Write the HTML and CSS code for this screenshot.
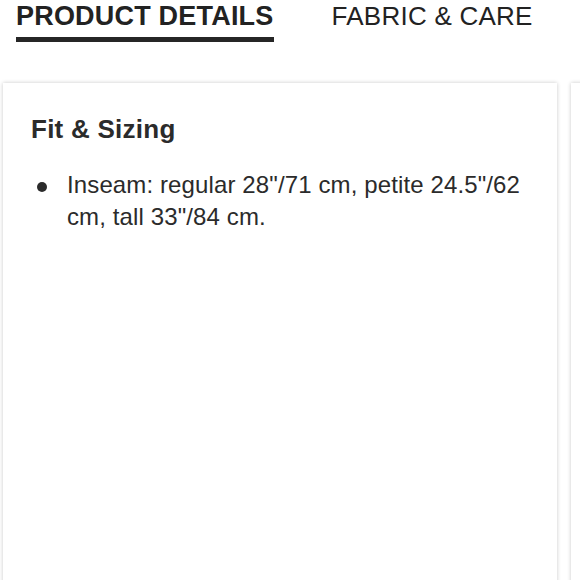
FILE: index.html
```html
<!DOCTYPE html>
<html>
<head>
<meta charset="utf-8">
<link rel="stylesheet" href="styles.css">
</head>
<body>
<nav class="tabs">
  <div class="tab tab-active">PRODUCT DETAILS</div>
  <div class="tab">FABRIC &amp; CARE</div>
</nav>
<div class="cards">
  <section class="card">
    <h2 class="card-title">Fit &amp; Sizing</h2>
    <ul class="bullets">
      <li>Inseam: regular 28"/71 cm, petite 24.5"/62 cm, tall 33"/84 cm.</li>
    </ul>
  </section>
  <section class="card card-next"></section>
</div>
</body>
</html>
```

FILE: styles.css
```css
html, body {
  margin: 0;
  padding: 0;
  background: #fff;
  font-family: "Liberation Sans", Arial, Helvetica, sans-serif;
  color: #2b2b2b;
  overflow: hidden;
  width: 580px;
  height: 580px;
}

.tabs {
  display: flex;
  align-items: flex-start;
  gap: 58px;
  padding-left: 16px;
}

.tab {
  font-size: 26px;
  line-height: 32px;
  letter-spacing: 0.25px;
  color: #222;
  white-space: nowrap;
}

.tab-active {
  font-weight: bold;
  font-size: 27px;
  letter-spacing: 0.2px;
  padding-bottom: 5px;
  border-bottom: 5px solid #262626;
}

.cards {
  display: flex;
  gap: 14px;
  padding: 0 0 0 3px;
  margin-top: 41px;
  width: 580px;
  box-sizing: border-box;
  overflow: hidden;
}

.card {
  flex: 0 0 554px;
  height: 520px;
  box-sizing: border-box;
  background: #fff;
  padding: 30px 28px 0 28px;
  margin: 4px 0;
  box-shadow: 0 0 4px rgba(0, 0, 0, 0.22);
}

.cards {
  margin-top: 37px;
}

.card-next {
  flex: 0 0 300px;
  padding: 0;
}

.card-title {
  margin: 0;
  font-size: 26px;
  line-height: 32px;
  font-weight: bold;
  letter-spacing: 0.25px;
  color: #2b2b2b;
}

.bullets {
  list-style: none;
  margin: 24px 0 0 0;
  padding: 0;
}

.bullets li {
  position: relative;
  padding-left: 36px;
  font-size: 24px;
  line-height: 32px;
  letter-spacing: 0.12px;
  color: #2b2b2b;
}

.bullets li::before {
  content: "";
  position: absolute;
  left: 6px;
  top: 13px;
  width: 10px;
  height: 10px;
  border-radius: 50%;
  background: #2b2b2b;
}
```
